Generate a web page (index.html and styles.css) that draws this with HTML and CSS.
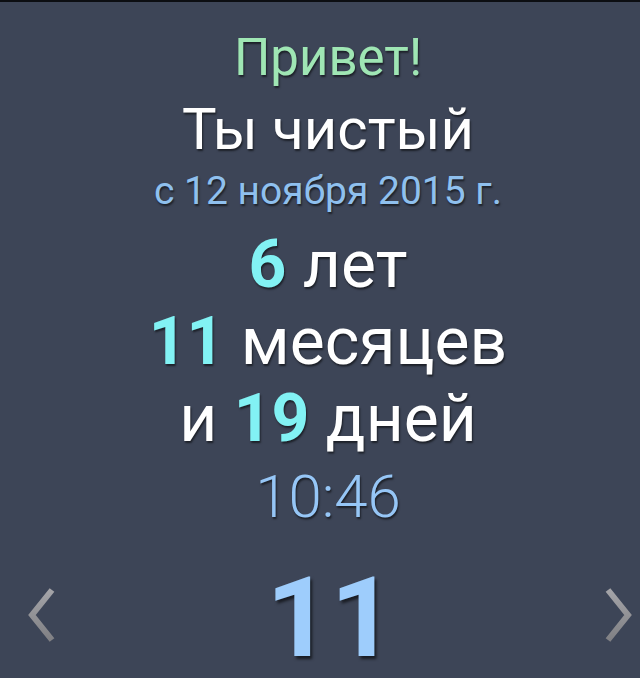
FILE: index.html
```html
<!DOCTYPE html>
<html lang="ru">
<head>
<meta charset="utf-8">
<link rel="stylesheet" href="styles.css">
</head>
<body>
<div class="topbar"></div>
<main class="screen">
  <section class="text">
    <div class="hello">Привет!</div>
    <div class="title">Ты чистый</div>
    <div class="since">с 12 ноября 2015 г.</div>
    <div class="big first"><b>6</b> лет</div>
    <div class="big"><b>11</b> месяцев</div>
    <div class="big">и <b>19</b> дней</div>
    <div class="time">10:46</div>
  </section>
  <div class="pager">
    <svg class="arrow" viewBox="0 0 30 56" width="30" height="56"><defs><linearGradient id="ag" x1="0" y1="0" x2="0" y2="1"><stop offset="0" stop-color="#a4a4a8"/><stop offset="1" stop-color="#808084"/></linearGradient></defs><polyline points="25,3 5,28 25,53" fill="none" stroke="url(#ag)" stroke-width="6" stroke-linejoin="miter"/></svg>
    <div class="count">11</div>
    <svg class="arrow" viewBox="0 0 30 56" width="30" height="56"><polyline points="4,3 24,28 4,53" fill="none" stroke="url(#ag)" stroke-width="6" stroke-linejoin="miter"/></svg>
  </div>
</main>
</body>
</html>
```
FILE: styles.css
```css
html, body {
  margin: 0;
  padding: 0;
  background: #3d4557;
  height: 678px;
  overflow: hidden;
}
body {
  font-family: Roboto, "Noto Sans", sans-serif;
  text-shadow: 1px 2px 2px rgba(0,0,0,0.55);
}
.topbar {
  height: 2px;
  background: #0c0e12;
}
.screen {
  display: flex;
  flex-direction: column;
  padding-top: 24px;
}
.text {
  display: flex;
  flex-direction: column;
  align-items: center;
  padding-left: 16px;
}
.hello {
  color: #9fe6b4;
  font-size: 51px;
  line-height: 64px;
}
.title {
  color: #ffffff;
  font-size: 58px;
  line-height: 64px;
  margin-top: 7px;
}
.since {
  color: #8fc0ee;
  font-size: 39px;
  line-height: 56px;
  margin-top: 2px;
}
.big {
  color: #ffffff;
  font-size: 66px;
  line-height: 77px;
}
.big.first {
  margin-top: 7px;
}
.big b {
  color: #82f2f4;
  font-weight: 700;
}
.time {
  color: #96c6f6;
  font-size: 60px;
  font-weight: 300;
  line-height: 80px;
}
.pager {
  display: flex;
  align-items: center;
  justify-content: space-between;
  padding: 0 6px 0 27px;
  margin-top: 26px;
}
.count {
  color: #9ecdfc;
  font-size: 112px;
  font-weight: 700;
  line-height: 110px;
  text-shadow: 2px 3px 3px rgba(0,0,0,0.6);
}
.arrow {
  display: block;
  margin-bottom: 6px;
}
```
